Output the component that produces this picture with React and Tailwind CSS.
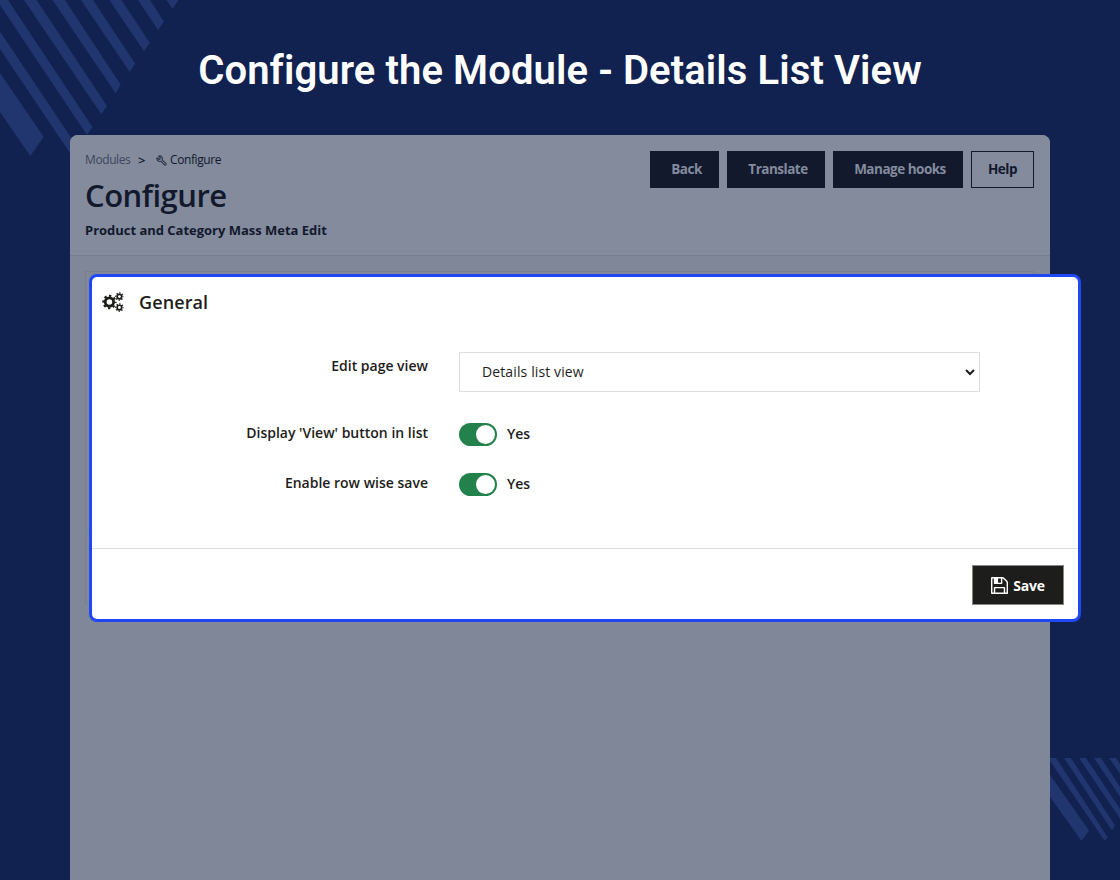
import React, { useState } from "react";
import { Wrench } from "lucide-react";

const headerButtons = [
  { label: "Back", className: "w-[69px]" },
  { label: "Translate", className: "w-[98px]" },
  { label: "Manage hooks", className: "w-[130px]" },
];

const CogsIcon = () => (
  <svg
    viewBox="0 0 1920 1792"
    className="w-[22px] h-[20px]"
    fill="none"
    stroke="currentColor"
  >
    <circle cx="640" cy="896" r="375" strokeWidth="250" />
    <circle
      cx="640"
      cy="896"
      r="550"
      strokeWidth="180"
      strokeDasharray="216"
      strokeDashoffset="108"
    />
    {/* Small gears */}
    <circle cx="1536" cy="410" r="205" strokeWidth="150" />
    <circle
      cx="1536"
      cy="410"
      r="320"
      strokeWidth="120"
      strokeDasharray="125.66"
      strokeDashoffset="63"
    />
    <circle cx="1536" cy="1390" r="205" strokeWidth="150" />
    <circle
      cx="1536"
      cy="1390"
      r="320"
      strokeWidth="120"
      strokeDasharray="125.66"
      strokeDashoffset="63"
    />
  </svg>
);

const SaveIcon = () => (
  <svg
    viewBox="0 128 1536 1536"
    className="w-[17px] h-[17px]"
    fill="currentColor"
  >
    <path d="M384 1536h768v-384h-768v384zm896 0h128v-896q0-14-10-38.5t-20-34.5l-281-281q-10-10-34-20t-39-10v416q0 40-28 68t-68 28h-576q-40 0-68-28t-28-68v-416h-128v1280h128v-416q0-40 28-68t68-28h832q40 0 68 28t28 68v416zm-384-928v-320q0-13-9.5-22.5t-22.5-9.5h-192q-13 0-22.5 9.5t-9.5 22.5v320q0 13 9.5 22.5t22.5 9.5h192q13 0 22.5-9.5t9.5-22.5zm640 32v928q0 40-28 68t-68 28h-1344q-40 0-68-28t-28-68v-1344q0-40 28-68t68-28h928q40 0 88 20t76 48l280 280q28 28 48 76t20 88z" />
  </svg>
);

const Stripes = () => (
  <svg
    viewBox="0 0 1120 880"
    className="absolute inset-0 w-[1120px] h-[880px]"
    fill="#21366f"
  >
    {/* Top left corner */}
    <path d="M0 73L43.7 136.7L30.3 156L0 112Z" />
    <path d="M0 31.5L78 148L72 156L0 49Z" />
    <path d="M0 0H8L92.5 127L87 135L0 5Z" />
    <path d="M24 0H36.5L107 106L101.3 114.3Z" />
    <path d="M52.5 0H65L120.7 84.7L115.7 93.3Z" />
    <path d="M81 0H93L135.3 63.7L129.7 72Z" />
    <path d="M109.3 0H121.5L149.7 42.7L144 51.3Z" />
    <path d="M138 0H150L164 21.7L158 30Z" />
    <path d="M166.5 0H178.5L172.5 9Z" />
    {/* Bottom right corner */}
    <path d="M1048 772L1089 830.5L1081.5 841L1048 794Z" />
    <path d="M1048 758H1056L1107.5 837L1104.8 841Z" />
    <path d="M1064 758H1071L1115 825.5L1112 830.5Z" />
    <path d="M1079 758H1086L1120 809V818.5Z" />
    <path d="M1094 758H1101L1120 787V796.5Z" />
    <path d="M1109 758H1116L1120 764V773.5Z" />
  </svg>
);

const Toggle = ({ checked, onChange }) => (
  <div className="flex items-center">
    <div
      className={`w-[38px] h-[23px] rounded-full flex items-center px-[2px] cursor-pointer ${
        checked ? "bg-[#23824c] justify-end" : "bg-gray-400 justify-start"
      }`}
      onClick={() => onChange(!checked)}
    >
      <div className="w-[19px] h-[19px] rounded-full bg-white" />
    </div>
    <span className="ml-[10px] text-[14px] leading-5 font-semibold">
      {checked ? "Yes" : "No"}
    </span>
  </div>
);

const App = () => {
  const [showView, setShowView] = useState(true);
  const [rowSave, setRowSave] = useState(true);

  return (
    <div className="relative w-[1120px] h-[880px] overflow-hidden bg-[#112150] font-['Open_Sans',sans-serif]">
      <Stripes />
      <h1 className="relative h-[135px] pt-[47px] text-center text-white text-[40px] leading-[48px] tracking-[0.1px] font-semibold font-['Roboto',sans-serif]">
        Configure the Module - Details List View
      </h1>

      <div className="relative mx-[70px] h-[745px] rounded-t-[8px] bg-[#7f8799] text-[#12192d]">
        {/* Page header */}
        <div className="h-[121px] flex justify-between px-[15px] pt-[15px] rounded-t-[8px] bg-[#838b9d] border-b border-[#757d90]">
          <div>
            <div className="flex items-center h-5 text-[12px] leading-5">
              <span className="w-[53px] text-[#3f475a] tracking-[-0.4px]">
                Modules
              </span>
              <span className="w-[18px] text-[13px] font-semibold">&gt;</span>
              <Wrench
                className="w-[11px] h-[11px] -scale-x-100 text-[#2b3347]"
                strokeWidth={2.4}
              />
              <span className="ml-[3px] tracking-[-0.4px]">Configure</span>
            </div>
            <h2 className="mt-[4px] text-[31px] leading-[42px] font-semibold tracking-[-0.5px]">
              Configure
            </h2>
            <p className="mt-[4px] text-[13px] leading-5 font-bold tracking-[-0.02px] whitespace-nowrap">
              Product and Category Mass Meta Edit
            </p>
          </div>
          <div className="flex gap-2 mt-[1px] mr-[1px] text-[13.5px] font-bold tracking-[-0.5px]">
            {headerButtons.map((button) => (
              <button
                key={button.label}
                className={`h-[37px] pl-1 bg-[#12192d] text-[#838b9d] ${button.className}`}
              >
                {button.label}
              </button>
            ))}
            <button className="w-[63px] h-[37px] border border-[#12192d]">
              Help
            </button>
          </div>
        </div>

        <div className="mt-[15px] ml-[15px] w-[949px] h-[333px] border border-[#777f91]">
          <div className="h-[262px] border-b border-[#777f91]" />
        </div>

        {/* Settings card */}
        <div className="absolute left-[19px] top-[139px] w-[992px] h-[348px] rounded-[8px] border-[3px] border-[#1f48f2] bg-white text-[#1d1d1b] flex flex-col">
          <div className="flex items-center h-[50px] pl-[10px]">
            <CogsIcon />
            <h3 className="ml-[15px] text-[18px] leading-6 font-semibold tracking-[0.1px]">
              General
            </h3>
          </div>
          <div className="h-[221px] pt-[25px] grid grid-cols-[336px_521px] gap-x-[31px] grid-rows-[43px_22px_22px] content-start gap-y-7 text-[14px] font-semibold">
            <label className="text-right leading-5 pt-[4px]">
              Edit page view
            </label>
            <div className="h-10 flex items-center justify-between pl-[22px] pr-1 border border-[#dedede] font-normal">
              <span className="pb-[2px] tracking-[0.12px]">
                Details list view
              </span>
              <svg
                viewBox="0 0 10 7"
                className="w-[10px] h-[7px]"
                fill="none"
                stroke="currentColor"
                strokeWidth="2"
              >
                <path d="M1 1L5 5L9 1" />
              </svg>
            </div>
            <label className="text-right leading-5">
              Display 'View' button in list
            </label>
            <Toggle checked={showView} onChange={setShowView} />
            <label className="text-right leading-5">
              Enable row wise save
            </label>
            <Toggle checked={rowSave} onChange={setRowSave} />
          </div>
          <div className="flex-1 flex justify-end items-start pt-[16px] pr-[14px] border-t border-[#dedede]">
            <button className="w-[92px] h-10 flex items-center justify-center gap-[5px] bg-[#1d1d1b] border border-[#868685] text-white text-[14px] font-bold tracking-[-0.2px]">
              <SaveIcon />
              Save
            </button>
          </div>
        </div>
      </div>
    </div>
  );
};

export default App;
